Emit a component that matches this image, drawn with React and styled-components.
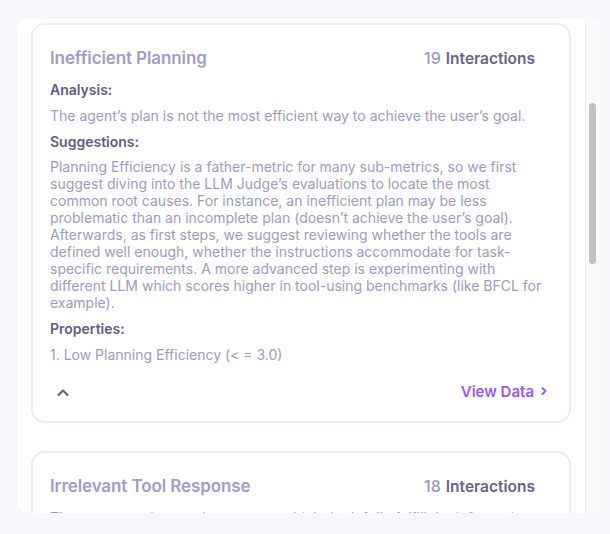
import React, { useLayoutEffect, useRef, useState } from "react";
import styled, { createGlobalStyle } from "styled-components";

const Global = createGlobalStyle`
  html, body { margin: 0; padding: 0; background: #f6f6fb; }
  body { font-family: Inter, "Noto Sans", sans-serif; -webkit-font-smoothing: antialiased; }
  * { box-sizing: border-box; }
`;

const Page = styled.div`
  height: 534px;
  padding: 19px 10px 21px 17px;
`;

const Panel = styled.div`
  height: 494px;
  background: #ffffff;
  border-radius: 12px 0 0 12px;
  overflow: hidden;
  display: flex;
`;

const ScrollArea = styled.div`
  flex: 1;
  height: 100%;
  overflow-y: auto;
  position: relative;
  scrollbar-width: none;
`;

const Track = styled.div`
  width: 15px;
  height: 100%;
  background: #fafafa;
  border-left: 1px solid #ececec;
  padding: 0 3px 0 3px;
`;

const Thumb = styled.div`
  width: 7px;
  border-radius: 4px;
  background: #c1c1c1;
`;

const List = styled.div`
  display: flex;
  flex-direction: column;
  gap: 28px;
  padding: 14px 14px 0 14px;
`;

const Intro = styled.div`
  display: flex;
  flex-direction: column;
  gap: 7px;
  padding: 0 4px;
`;

const IntroTitle = styled.div`
  font-size: 18px;
  line-height: 24px;
  font-weight: 600;
  color: #5e5e84;
`;

const Card = styled.div`
  border: 2px solid #ececf6;
  border-radius: 14px;
  padding: 21px 18px 16px 17px;
  display: flex;
  flex-direction: column;
`;

const Header = styled.div`
  display: flex;
  align-items: center;
  justify-content: space-between;
  height: 24px;
  padding-right: 16px;
  margin-bottom: 11px;
`;

const Title = styled.div`
  font-size: 17px;
  font-weight: 600;
  color: #9e9ec6;
  letter-spacing: -0.1px;
`;

const Count = styled.div`
  display: flex;
  align-items: baseline;
  gap: 5px;
`;

const CountNum = styled.span`
  font-size: 16px;
  font-weight: 500;
  color: #9a9abf;
`;

const CountLabel = styled.span`
  font-size: 15.5px;
  font-weight: 600;
  color: #64648e;
`;

const Section = styled.div`
  display: flex;
  flex-direction: column;
  gap: 8.5px;
  margin-bottom: 9px;
`;

const Label = styled.div`
  font-size: 14px;
  line-height: 17px;
  font-weight: 600;
  color: #5e5e84;
`;

const Text = styled.div`
  font-size: 14px;
  line-height: 17px;
  color: #9c9cc2;
`;

const Footer = styled.div`
  display: flex;
  align-items: center;
  justify-content: space-between;
  height: 24px;
  margin-top: 9px;
  padding: 0 3px 0 5px;
`;

const Toggle = styled.button`
  background: none;
  border: 0;
  padding: 0;
  display: flex;
  color: #5b5b80;
  cursor: pointer;
`;

const ViewData = styled.a`
  display: flex;
  align-items: center;
  gap: 6px;
  padding-bottom: 3px;
  font-size: 15px;
  font-weight: 600;
  color: #9a58ef;
  text-decoration: none;
  cursor: pointer;
`;

const Chevron = ({ up }) => (
  <svg width="16" height="16" viewBox="0 0 16 16" fill="none">
    <path
      d={up ? "M3.5 10 L8 5.5 L12.5 10" : "M3.5 6 L8 10.5 L12.5 6"}
      stroke="currentColor"
      strokeWidth="2"
      strokeLinecap="round"
      strokeLinejoin="round"
    />
  </svg>
);

const SmallRight = () => (
  <svg width="8" height="10" viewBox="0 0 8 10" fill="none">
    <path d="M2.5 2 L5.5 5 L2.5 8" stroke="currentColor" strokeWidth="1.8" strokeLinecap="round" strokeLinejoin="round" />
  </svg>
);

const cards = [
  {
    title: "Incomplete Task Completion",
    count: 24,
    text:
      "The agent ends the conversation before all of the user's requests have been fully addressed, leaving parts of the task unfinished.",
  },
  {
    title: "Inefficient Planning",
    count: 19,
    open: true,
    analysis: "The agent\u2019s plan is not the most efficient way to achieve the user\u2019s goal.",
    suggestions:
      "Planning Efficiency is a father-metric for many sub-metrics, so we first suggest diving into the LLM Judge\u2019s evaluations to locate the most common root causes. For instance, an inefficient plan may be less problematic than an incomplete plan (doesn\u2019t achieve the user\u2019s goal). Afterwards, as first steps, we suggest reviewing whether the tools are defined well enough, whether the instructions accommodate for task-specific requirements. A more advanced step is experimenting with different LLM which scores higher in tool-using benchmarks (like BFCL for example).",
    properties: ["1. Low Planning Efficiency (< = 3.0)"],
  },
  {
    title: "Irrelevant Tool Response",
    count: 18,
    text:
      "The agent receives tool responses which don\u2019t fully fulfill the information the user asked about, and continues without correcting them.",
  },
  {
    title: "Repeated Tool Calls",
    count: 12,
    text:
      "The agent calls the same tool several times with identical arguments instead of reusing the results it already received earlier.",
  },
  {
    title: "Missing Clarification",
    count: 9,
    text:
      "The agent proceeds with its own assumptions instead of asking the user for the details needed to complete the request correctly.",
  },
  {
    title: "Wrong Tool Arguments",
    count: 7,
    text:
      "The agent passes arguments to tools that do not match the expected schema, which causes the tool calls to fail or return errors.",
  },
  {
    title: "Unfaithful Response",
    count: 4,
    text:
      "The final answer includes claims that are not supported by the tool outputs or the retrieved context provided during the session.",
  },
];

const InsightCard = React.forwardRef(({ c }, ref) => (
  <Card ref={ref}>
    <Header>
      <Title>{c.title}</Title>
      <Count>
        <CountNum>{c.count}</CountNum>
        <CountLabel>Interactions</CountLabel>
      </Count>
    </Header>
    {c.open ? (
      <>
        <Section>
          <Label>Analysis:</Label>
          <Text>{c.analysis}</Text>
        </Section>
        <Section>
          <Label>Suggestions:</Label>
          <Text>{c.suggestions}</Text>
        </Section>
        <Section>
          <Label>Properties:</Label>
          {c.properties.map((p) => (
            <Text key={p}>{p}</Text>
          ))}
        </Section>
      </>
    ) : (
      <Text>{c.text}</Text>
    )}
    <Footer>
      <Toggle aria-label="toggle">
        <Chevron up={!!c.open} />
      </Toggle>
      <ViewData>
        View Data
        <SmallRight />
      </ViewData>
    </Footer>
  </Card>
));

export default function App() {
  const areaRef = useRef(null);
  const focusRef = useRef(null);
  const [thumb, setThumb] = useState({ top: 0, height: 0 });

  const measure = () => {
    const el = areaRef.current;
    if (!el) return;
    const h = el.clientHeight;
    setThumb({
      top: (el.scrollTop / el.scrollHeight) * h,
      height: (h * h) / el.scrollHeight,
    });
  };

  useLayoutEffect(() => {
    if (areaRef.current && focusRef.current) {
      areaRef.current.scrollTop = focusRef.current.offsetTop - 4;
    }
    measure();
  }, []);

  return (
    <>
      <Global />
      <Page>
        <Panel>
          <ScrollArea ref={areaRef} onScroll={measure}>
            <List>
              <Intro>
                <IntroTitle>Insights</IntroTitle>
                <Text>Recurring issues detected across your agent sessions.</Text>
              </Intro>
              {cards.map((c) => (
                <InsightCard key={c.title} c={c} ref={c.open ? focusRef : undefined} />
              ))}
            </List>
          </ScrollArea>
          <Track>
            <Thumb style={{ marginTop: thumb.top, height: thumb.height }} />
          </Track>
        </Panel>
      </Page>
    </>
  );
}
